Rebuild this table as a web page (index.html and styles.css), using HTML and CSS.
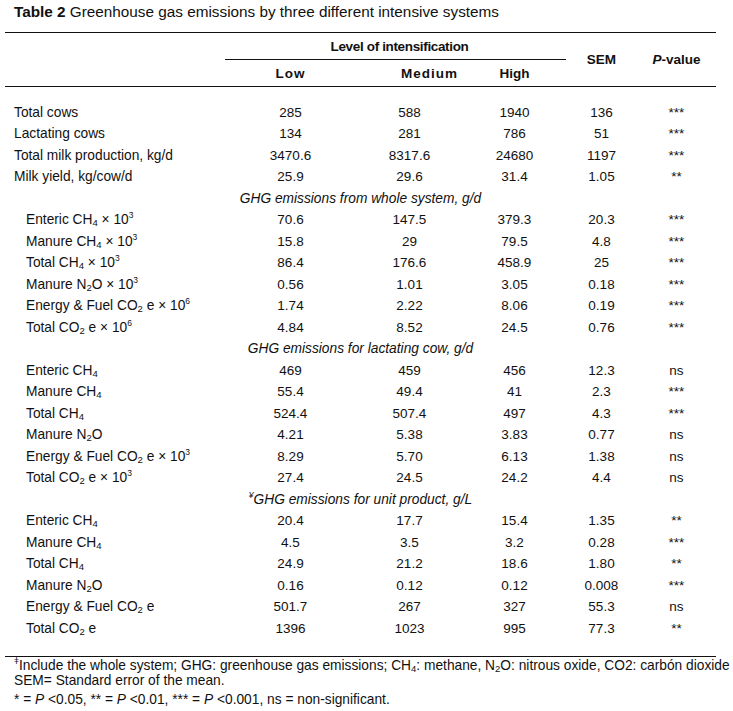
FILE: index.html
```html
<!DOCTYPE html>
<html>
<head>
<meta charset="utf-8">
<title>Table 2</title>
<link rel="stylesheet" href="styles.css">
</head>
<body>
<div class="page">
  <p class="title"><b>Table 2</b> Greenhouse gas emissions by three different intensive systems</p>
  <table class="data">
    <colgroup>
      <col class="c-label"><col class="c-low"><col class="c-med"><col class="c-high"><col class="c-sem"><col class="c-p">
    </colgroup>
    <thead>
      <tr class="h1">
        <th rowspan="2"></th>
        <th colspan="3" class="level">Level of intensification</th>
        <th rowspan="2">SEM</th>
        <th rowspan="2"><i>P</i>-value</th>
      </tr>
      <tr class="h2">
        <th class="low">Low</th><th class="med">Medium</th><th>High</th>
      </tr>
    </thead>
    <tbody>
      <tr class="gap-top"><td colspan="6"></td></tr>
      <tr><td class="lab">Total cows</td><td>285</td><td>588</td><td>1940</td><td>136</td><td>***</td></tr>
      <tr><td class="lab">Lactating cows</td><td>134</td><td>281</td><td>786</td><td>51</td><td>***</td></tr>
      <tr><td class="lab">Total milk production, kg/d</td><td>3470.6</td><td>8317.6</td><td>24680</td><td>1197</td><td>***</td></tr>
      <tr><td class="lab">Milk yield, kg/cow/d</td><td>25.9</td><td>29.6</td><td>31.4</td><td>1.05</td><td>**</td></tr>
      <tr><td colspan="6" class="sec">GHG emissions from whole system, g/d</td></tr>
      <tr><td class="lab ind">Enteric CH<span class="sub">4</span> × 10<span class="sup">3</span></td><td>70.6</td><td>147.5</td><td>379.3</td><td>20.3</td><td>***</td></tr>
      <tr><td class="lab ind">Manure CH<span class="sub">4</span> × 10<span class="sup">3</span></td><td>15.8</td><td>29</td><td>79.5</td><td>4.8</td><td>***</td></tr>
      <tr><td class="lab ind">Total CH<span class="sub">4</span> × 10<span class="sup">3</span></td><td>86.4</td><td>176.6</td><td>458.9</td><td>25</td><td>***</td></tr>
      <tr><td class="lab ind">Manure N<span class="sub">2</span>O × 10<span class="sup">3</span></td><td>0.56</td><td>1.01</td><td>3.05</td><td>0.18</td><td>***</td></tr>
      <tr><td class="lab ind">Energy &amp; Fuel CO<span class="sub">2</span> e × 10<span class="sup">6</span></td><td>1.74</td><td>2.22</td><td>8.06</td><td>0.19</td><td>***</td></tr>
      <tr><td class="lab ind">Total CO<span class="sub">2</span> e × 10<span class="sup">6</span></td><td>4.84</td><td>8.52</td><td>24.5</td><td>0.76</td><td>***</td></tr>
      <tr><td colspan="6" class="sec">GHG emissions for lactating cow, g/d</td></tr>
      <tr><td class="lab ind">Enteric CH<span class="sub">4</span></td><td>469</td><td>459</td><td>456</td><td>12.3</td><td>ns</td></tr>
      <tr><td class="lab ind">Manure CH<span class="sub">4</span></td><td>55.4</td><td>49.4</td><td>41</td><td>2.3</td><td>***</td></tr>
      <tr><td class="lab ind">Total CH<span class="sub">4</span></td><td>524.4</td><td>507.4</td><td>497</td><td>4.3</td><td>***</td></tr>
      <tr><td class="lab ind">Manure N<span class="sub">2</span>O</td><td>4.21</td><td>5.38</td><td>3.83</td><td>0.77</td><td>ns</td></tr>
      <tr><td class="lab ind">Energy &amp; Fuel CO<span class="sub">2</span> e × 10<span class="sup">3</span></td><td>8.29</td><td>5.70</td><td>6.13</td><td>1.38</td><td>ns</td></tr>
      <tr><td class="lab ind">Total CO<span class="sub">2</span> e × 10<span class="sup">3</span></td><td>27.4</td><td>24.5</td><td>24.2</td><td>4.4</td><td>ns</td></tr>
      <tr><td colspan="6" class="sec"><span class="sup">¥</span>GHG emissions for unit product, g/L</td></tr>
      <tr><td class="lab ind">Enteric CH<span class="sub">4</span></td><td>20.4</td><td>17.7</td><td>15.4</td><td>1.35</td><td>**</td></tr>
      <tr><td class="lab ind">Manure CH<span class="sub">4</span></td><td>4.5</td><td>3.5</td><td>3.2</td><td>0.28</td><td>***</td></tr>
      <tr><td class="lab ind">Total CH<span class="sub">4</span></td><td>24.9</td><td>21.2</td><td>18.6</td><td>1.80</td><td>**</td></tr>
      <tr><td class="lab ind">Manure N<span class="sub">2</span>O</td><td>0.16</td><td>0.12</td><td>0.12</td><td>0.008</td><td>***</td></tr>
      <tr><td class="lab ind">Energy &amp; Fuel CO<span class="sub">2</span> e</td><td>501.7</td><td>267</td><td>327</td><td>55.3</td><td>ns</td></tr>
      <tr><td class="lab ind">Total CO<span class="sub">2</span> e</td><td>1396</td><td>1023</td><td>995</td><td>77.3</td><td>**</td></tr>
      <tr class="gap-bottom"><td colspan="6"></td></tr>
    </tbody>
  </table>
  <div class="notes">
    <p class="note n1"><span class="sup">ǂ</span>Include the whole system; GHG: greenhouse gas emissions; CH<span class="sub">4</span>: methane, N<span class="sub">2</span>O: nitrous oxide, CO2: carbón dioxide</p>
    <p class="note n2">SEM= Standard error of the mean.</p>
    <p class="note n3">* = <i>P</i> &lt;0.05, ** = <i>P</i> &lt;0.01, *** = <i>P</i> &lt;0.001, ns = non-significant.</p>
  </div>
</div>
</body>
</html>
```
FILE: styles.css
```css
* { box-sizing: border-box; }
html, body { margin: 0; padding: 0; background: #fff; }
body {
  font-family: "Liberation Sans", Arial, sans-serif;
  font-size: 13.75px;
  color: #111;
}
.page { width: 733px; padding: 3px 0 0 5px; }
.title { margin: 0 0 0 9px; font-size: 15.3px; line-height: 18px; height: 29px; }
.data {
  border-collapse: collapse;
  table-layout: fixed;
  width: 711px;
  font-size: 13.5px;
}
.c-label { width: 220px; }
.c-low { width: 131px; }
.c-med { width: 107px; }
.c-high { width: 103px; }
.c-sem { width: 71px; }
.c-p { width: 79px; }
.data thead { border-top: 1px solid #111; border-bottom: 1px solid #111; }
.data th { padding: 0; font-weight: bold; text-align: center; white-space: nowrap; }
.data .h1 th, .data .h2 th { height: 27px; }
.data th.level { border-bottom: 1px solid #111; letter-spacing: -0.35px; padding-left: 8px; }
.data th.low { letter-spacing: 1px; }
.data th.med { padding-left: 40px; letter-spacing: 1px; }
.data td {
  padding: 0;
  height: 21.5px;
  line-height: 21.5px;
  text-align: center;
  white-space: nowrap;
}
.data td.lab { text-align: left; padding-left: 9px; font-size: 13.75px; }
.data td.ind { padding-left: 21px; }
.data td.sec { font-style: italic; font-size: 13.75px; }
.data .gap-top td { height: 15px; line-height: 15px; }
.data .gap-bottom td { height: 17px; line-height: 17px; }
.data tbody tr:last-child { border-bottom: 1px solid #111; }
.sub { font-size: 9.5px; vertical-align: -2px; line-height: 0; }
.sup { font-size: 8.5px; vertical-align: 6px; line-height: 0; }
.notes { padding-left: 9px; }
.note { margin: 0; white-space: nowrap; line-height: 15px; }
.n1 { margin-top: 1px; }
.n3 { margin-top: 4px; }
```
